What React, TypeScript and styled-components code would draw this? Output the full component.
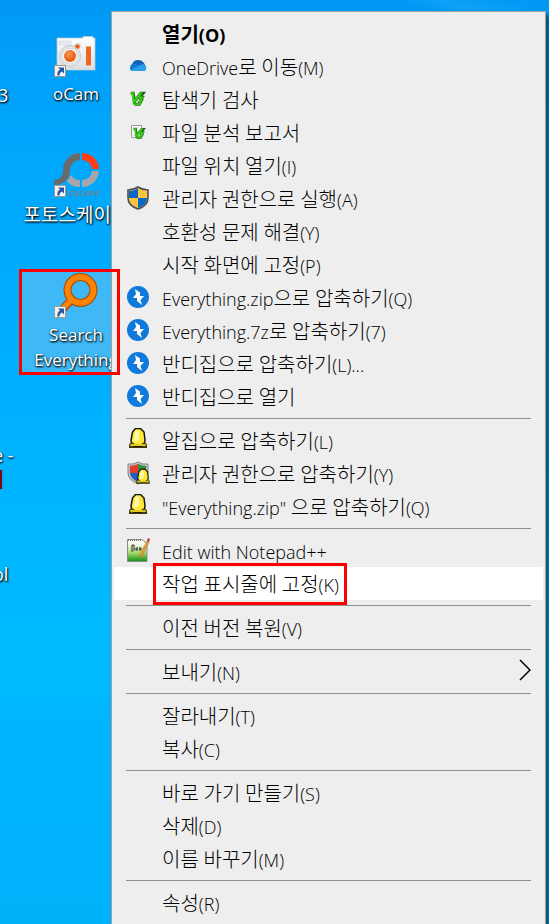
import React from 'react';
import styled, { createGlobalStyle, css } from 'styled-components';

const GlobalStyle = createGlobalStyle`
  *, *::before, *::after { box-sizing: border-box; }
  body { margin: 0; font-family: "Open Sans", "Noto Sans CJK KR", sans-serif; }
`;

const Desktop = styled.main`
  position: relative;
  height: 100vh;
  overflow: hidden;
  background:
    linear-gradient(16deg, transparent 0 96%, rgba(60, 185, 255, 0.25) 97%, transparent 99%),
    linear-gradient(180deg, #0099f4 0, #00a6fb 14%, #00aeff 38%, #00b7ff 58%, #00baff 74%, #00b5ff 78%, #00b2fa 100%);
`;

const Shortcut = styled.a<{ $top: number; $selected?: boolean }>`
  position: absolute;
  left: 21px;
  top: ${p => p.$top}px;
  width: 110px;
  min-height: 101px;
  display: flex;
  flex-direction: column;
  align-items: center;
  color: #fff;
  font-size: 17px;
  line-height: 25px;
  text-align: center;
  text-decoration: none;
  white-space: nowrap;
  text-shadow: 1px 1px 2px #000, 0 1px 2px rgba(0, 0, 0, 0.7);
  ${p => p.$selected && css`
    background: #3fb8f6;
    border: 1px solid #79cdf9;
  `}
`;

const ShortcutIcon = styled.svg`
  width: 48px;
  height: 48px;
  margin: -2px 0 4px;
  flex: none;
  text-shadow: none;
`;

const ShortcutHangul = styled.span`
  font-family: "Noto Sans CJK KR", sans-serif;
  font-size: 19px;
`;

const ClippedLabel = styled.span<{ $top: number; $left: number }>`
  position: absolute;
  left: ${p => p.$left}px;
  top: ${p => p.$top}px;
  color: #fff;
  font-size: 18px;
  line-height: 25px;
  white-space: nowrap;
  text-shadow: 1px 1px 2px #000, 0 1px 2px rgba(0, 0, 0, 0.7);
`;

const ClippedIcon = styled.span`
  position: absolute;
  left: 0;
  top: 470px;
  width: 2px;
  height: 19px;
  background: #7d0a12;
  box-shadow: 0 0 1px #400;
`;

const Menu = styled.div`
  position: relative;
  margin: 11px 3px 0 111px;
  padding: 5px 2px;
  border: 1px solid #a0a0a0;
  background: #eee;
  box-shadow: 4px 4px 4px rgba(0, 0, 0, 0.5);
`;

const Item = styled.button<{ $active?: boolean; $bold?: boolean }>`
  display: grid;
  grid-template-columns: 48px 1fr 24px;
  align-items: center;
  width: 100%;
  height: 33px;
  padding: 0;
  border: 0;
  color: #000;
  background: ${p => (p.$active ? '#fff' : 'transparent')};
  font-family: inherit;
  font-size: 18px;
  font-weight: ${p => (p.$bold ? 700 : 300)};
  line-height: 33px;
  text-align: left;
  white-space: nowrap;
`;

const IconSlot = styled.span`
  display: flex;
  justify-content: center;
  height: 33px;
  padding-top: 4px;
`;

const ItemIcon = styled.svg`
  width: 24px;
  height: 24px;
`;

const Label = styled.span`
  position: relative;
  justify-self: start;
  padding-top: 2px;
  height: 33px;
`;

const Hangul = styled.span`
  font-family: "Noto Sans CJK KR", sans-serif;
  font-size: 20px;
  line-height: 20px;
`;

const Separator = styled.hr`
  height: 1px;
  margin: 5px 12px;
  border: 0;
  background: #919191;
`;

const Highlight = styled.span`
  position: absolute;
  inset: -4px -8px -5px -9px;
  border: 3px solid #f00;
  pointer-events: none;
`;

const DesktopHighlight = styled.div`
  position: absolute;
  left: 19px;
  top: 269px;
  width: 101px;
  height: 106px;
  border: 3px solid #f00;
  pointer-events: none;
`;

const ShortcutArrow = () => (
  <g>
    <rect x="2.5" y="36.5" width="11" height="11" fill="#f4f4f4" stroke="#9a9a9a" />
    <path d="M6 38.5h6v6l-2-2c-2 1-2.500 2-2.500 4h-2c-.5-3 .5-5 2.500-6z" fill="#2a569f" />
  </g>
);

const OCamIcon = () => (
  <ShortcutIcon viewBox="0 0 48 48" aria-hidden="true">
    <defs>
      <linearGradient id="cam" x2="0" y2="1"><stop stopColor="#fff" /><stop offset="1" stopColor="#dcdfe2" /></linearGradient>
      <radialGradient id="lens" cx=".4" cy=".35"><stop stopColor="#f79a5c" /><stop offset="1" stopColor="#e85f13" /></radialGradient>
    </defs>
    <path d="M5 9h26V7.500h10V9h2v32H5z" fill="url(#cam)" stroke="#b5c6d2" strokeWidth=".8" />
    <rect x="7" y="12" width="12" height="4" fill="#e6eaed" stroke="#cbd4da" strokeWidth=".5" />
    <circle cx="18" cy="27" r="10.500" fill="#e3e5e7" stroke="#c8cbcd" />
    <circle cx="18" cy="27" r="7.500" fill="#fff" stroke="#c9c9c9" strokeWidth=".6" />
    <circle cx="18" cy="27" r="6" fill="url(#lens)" />
    <circle cx="25.500" cy="17.500" r="3.200" fill="#eee" stroke="#c9c9c9" strokeWidth=".6" />
    <circle cx="25.500" cy="17.500" r="2.300" fill="#e8621a" />
    <rect x="34" y="17.500" width="5" height="19" fill="#e8691f" />
    <ShortcutArrow />
  </ShortcutIcon>
);

const PhotoScapeIcon = () => (
  <ShortcutIcon viewBox="0 0 48 48" aria-hidden="true">
    <path d="M28 4a17 17 0 0 0-17 17c0 6-3 10-9 10v5c11 0 16-7 16-15a10 10 0 0 1 10-10z" fill="#686a6d" />
    <path d="M30 4a17 17 0 0 1 17 16h-7a10 10 0 0 0-10-9z" fill="#ff3d12" />
    <path d="M47 22a17 17 0 0 1-17 16v-7a10 10 0 0 0 10-9z" fill="#a4a6a9" />
    <path d="M28 31v7c-6 0-10-2-13-6l4-6c2 3 5 5 9 5z" fill="#a4a6a9" />
    <text x="14" y="47" fontFamily="Liberation Sans" fontSize="7" fontWeight="700" fill="#708391">TOSCAPE</text>
    <ShortcutArrow />
  </ShortcutIcon>
);

const EverythingIcon = () => (
  <ShortcutIcon viewBox="0 0 48 48" aria-hidden="true">
    <path d="M20 29L9 41" stroke="#a94b00" strokeWidth="8" />
    <circle cx="28.500" cy="20" r="13" fill="none" stroke="#a94b00" strokeWidth="8" />
    <path d="M20.500 28.500L9 40.500" stroke="#ff8200" strokeWidth="5.500" />
    <circle cx="28.500" cy="20" r="13" fill="none" stroke="#ff8200" strokeWidth="5.800" />
    <ShortcutArrow />
  </ShortcutIcon>
);

const CloudIcon = () => (
  <ItemIcon viewBox="0 0 24 24" aria-hidden="true">
    <path d="M6 11q1-5 6-5 5 0 7 5l-7 4z" fill="#0f64b8" />
    <path d="M6 10c3-1 5 0 7 2l-6 5q-3 0-3-3 0-3 2-4z" fill="#1279cf" />
    <path d="M12 12q5-3 7-1 2 1 1 4 0 2-3 2H7q-2 0-2-1z" fill="#29a0ed" />
  </ItemIcon>
);

const V3Icon = ({ report = false }: { report?: boolean }) => (
  <ItemIcon viewBox="0 0 24 24" aria-hidden="true">
    {report && <path d="M5.500 5.500h10v12h-10z" fill="#f8f8f8" stroke="#999" />}
    {report && <path d="M7 8h5M7 10h2M7 15h2" stroke="#bbb" />}
    <g transform={report ? 'translate(4 5) scale(.75)' : 'translate(0 1) scale(.95)'} fill="none">
      <path d="M5 5.500h2.500L9 14l6.500-8.500H18l-3.500 4.500h2.500l-2 3.500h1L14 17H9" stroke="#156b10" strokeWidth="3.200" />
      <path d="M5 5.500h2L8 15l7.500-9.500H17" stroke="#3ccc1c" strokeWidth="2.300" />
      <path d="M13.500 10h3.500l-2.500 3.500h1.500L14 17H9" stroke="#3ccc1c" strokeWidth="1.900" />
    </g>
  </ItemIcon>
);

const ShieldIcon = () => (
  <ItemIcon viewBox="0 0 24 24" aria-hidden="true">
    <path d="M12 1c3 2 6 3 10 3v8c0 5-4 9-10 11C6 21 2 17 2 12V4c4 0 7-1 10-3z" fill="#ffc341" stroke="#494f57" strokeWidth="1.600" />
    <path d="M12 2v10H3V5c4 0 6-1 9-3zM12 12h9c0 5-4 8-9 10z" fill="#0868c8" />
  </ItemIcon>
);

const BandizipIcon = () => (
  <ItemIcon viewBox="0 0 24 24" aria-hidden="true">
    <circle cx="12" cy="12" r="11" fill="#0f7adb" />
    <path d="M9 4l5 3.500v3.500h4l-3.500 4 1.500 5-5-4V13H7l3-4z" fill="#fff" />
  </ItemIcon>
);

const Egg = () => (
  <g>
    <path d="M3 19h18v2H3z" fill="#3a340e" />
    <path d="M9.500 1.500h5l3.500 3.500 1 8-1 6H6L5 13 6.500 5z" fill="#ffe83a" stroke="#17160b" strokeWidth="1.500" />
    <path d="M9 4q3-2 4 1v7q-3 4-5 2z" fill="#fffaa8" />
    <ellipse cx="6" cy="18" rx="2.500" ry="2" fill="#d9bf20" stroke="#27210b" />
    <ellipse cx="18" cy="18" rx="2.500" ry="2" fill="#d9bf20" stroke="#27210b" />
    <path d="M7 17h10v2H7z" fill="#e3c81e" />
  </g>
);

const EggIcon = () => <ItemIcon viewBox="0 1 24 24" aria-hidden="true"><Egg /></ItemIcon>;

const EggShieldIcon = () => (
  <ItemIcon viewBox="0 0 24 24" aria-hidden="true">
    <path d="M12 1q5 3 10 2v9q0 7-10 11Q2 19 2 12V3q5 1 10-2z" fill="#bbb" stroke="#888" />
    <path d="M12 3v9H4V5q4 0 8-2z" fill="#e43a28" />
    <path d="M12 3q4 2 8 2v7h-8z" fill="#2b9140" />
    <path d="M4 12h8v9q-7-3-8-9z" fill="#205cc4" />
    <g transform="translate(8 7) scale(.75)"><Egg /></g>
  </ItemIcon>
);

const NotepadIcon = () => (
  <ItemIcon viewBox="0 0 24 24" aria-hidden="true">
    <defs><linearGradient id="pad" x2="0" y2="1"><stop offset=".2" stopColor="#f7fbf4" /><stop offset=".6" stopColor="#a7d96b" /><stop offset="1" stopColor="#138f18" /></linearGradient></defs>
    <path d="M1.500 1.500H16l5 4v18H1.500z" fill="url(#pad)" stroke="#8b8f8b" />
    <path d="M2 2h14" stroke="#777" strokeDasharray="1 1" strokeWidth="2" />
    <path d="M6 14V7h2v6M9 11h3M13 11h3M11 9v4M14 9v4" fill="none" stroke="#333" />
    <path d="M21 3l-7 14-1 3 3-2 7-14z" fill="#f2a42b" stroke="#9b641c" strokeWidth=".5" />
    <path d="M21 3l1-3 2 1-1 3z" fill="#b43b32" />
  </ItemIcon>
);

const Chevron = styled.svg`
  width: 12px;
  height: 22px;
  margin-bottom: 4px;
`;

const KoreanText = ({ text }: { text: string }) => (
  <>
    {text.split(/([가-힣]+)/).map((part, i) =>
      /[가-힣]/.test(part) ? <Hangul key={i}>{part}</Hangul> : part,
    )}
  </>
);

type Entry = { text: string; icon?: React.ReactNode; bold?: boolean; active?: boolean; submenu?: boolean };

const groups: Entry[][] = [
  [
    { text: '열기(O)', bold: true },
    { text: 'OneDrive로 이동(M)', icon: <CloudIcon /> },
    { text: '탐색기 검사', icon: <V3Icon /> },
    { text: '파일 분석 보고서', icon: <V3Icon report /> },
    { text: '파일 위치 열기(I)' },
    { text: '관리자 권한으로 실행(A)', icon: <ShieldIcon /> },
    { text: '호환성 문제 해결(Y)' },
    { text: '시작 화면에 고정(P)' },
    { text: 'Everything.zip으로 압축하기(Q)', icon: <BandizipIcon /> },
    { text: 'Everything.7z로 압축하기(7)', icon: <BandizipIcon /> },
    { text: '반디집으로 압축하기(L)...', icon: <BandizipIcon /> },
    { text: '반디집으로 열기', icon: <BandizipIcon /> },
  ],
  [
    { text: '알집으로 압축하기(L)', icon: <EggIcon /> },
    { text: '관리자 권한으로 압축하기(Y)', icon: <EggShieldIcon /> },
    { text: '"Everything.zip" 으로 압축하기(Q)', icon: <EggIcon /> },
  ],
  [
    { text: 'Edit with Notepad++', icon: <NotepadIcon /> },
    { text: '작업 표시줄에 고정(K)', active: true },
  ],
  [{ text: '이전 버전 복원(V)' }],
  [{ text: '보내기(N)', submenu: true }],
  [{ text: '잘라내기(T)' }, { text: '복사(C)' }],
  [{ text: '바로 가기 만들기(S)' }, { text: '삭제(D)' }, { text: '이름 바꾸기(M)' }],
  [{ text: '속성(R)' }],
];

export default function App() {
  return (
    <>
      <GlobalStyle />
      <Desktop>
        <ClippedLabel $left={-2} $top={83}>3</ClippedLabel>
        <ClippedLabel $left={-7} $top={443}>e -</ClippedLabel>
        <ClippedIcon />
        <ClippedLabel $left={-7} $top={562}>ol</ClippedLabel>
        <Shortcut href="#ocam" $top={31}>
          <OCamIcon />oCam
        </Shortcut>
        <Shortcut href="#photoscape" $top={151}>
          <PhotoScapeIcon /><ShortcutHangul>포토스케이프</ShortcutHangul>
        </Shortcut>
        <Shortcut href="#everything" $top={271} $selected>
          <EverythingIcon />Search<br />Everything
        </Shortcut>
        <Menu role="menu">
          {groups.map((group, g) => (
            <React.Fragment key={g}>
              {g > 0 && <Separator />}
              {group.map(item => (
                <Item key={item.text} role="menuitem" $active={item.active} $bold={item.bold}>
                  <IconSlot>{item.icon}</IconSlot>
                  <Label>
                    <KoreanText text={item.text} />
                    {item.active && <Highlight />}
                  </Label>
                  {item.submenu && (
                    <Chevron viewBox="0 0 12 22" aria-hidden="true">
                      <path d="M1 1l10 10L1 21" fill="none" stroke="#000" strokeWidth="1.500" />
                    </Chevron>
                  )}
                </Item>
              ))}
            </React.Fragment>
          ))}
        </Menu>
        <DesktopHighlight />
      </Desktop>
    </>
  );
}
